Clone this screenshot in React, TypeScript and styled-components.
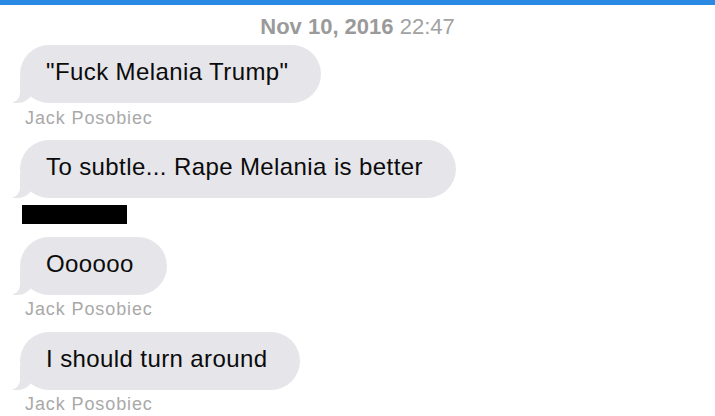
import React from "react";
import styled, { createGlobalStyle } from "styled-components";

const Global = createGlobalStyle`
  html, body { margin: 0; padding: 0; background: #ffffff; }
  body { font-family: "Liberation Sans", Arial, sans-serif; }
`;

const Page = styled.div`
  width: 715px;
  height: 416px;
  overflow: hidden;
  background: #ffffff;
  display: flex;
  flex-direction: column;
`;

const TopBar = styled.div`
  height: 5px;
  flex: none;
  background: #2a8ae3;
`;

const Thread = styled.div`
  display: flex;
  flex-direction: column;
  align-items: flex-start;
  padding: 0 20px;
`;

const DateLine = styled.div`
  align-self: stretch;
  margin-top: 9px;
  text-align: center;
  font-size: 22px;
  line-height: 26px;
  color: #a2a2a2;
`;

const DateStrong = styled.span`
  font-weight: 700;
  color: #9a9a9a;
`;

const Bubble = styled.div<{ $gap: number }>`
  position: relative;
  margin-top: ${(p) => p.$gap}px;
  height: 58px;
  box-sizing: border-box;
  padding: 12px 33px 17px 26px;
  background: #e5e5ea;
  border-radius: 29px;
  font-size: 24px;
  line-height: 29px;
  letter-spacing: 0.4px;
  color: #0b0b0b;
  white-space: nowrap;

  &::before,
  &::after {
    content: "";
    position: absolute;
    bottom: 0;
    height: 24px;
  }
  &::before {
    left: -7px;
    width: 20px;
    background: #e5e5ea;
    border-bottom-right-radius: 16px 14px;
  }
  &::after {
    left: -26px;
    width: 26px;
    background: #ffffff;
    border-bottom-right-radius: 10px;
  }
`;

const Sender = styled.div<{ $gap: number }>`
  margin-top: ${(p) => p.$gap}px;
  margin-left: 5px;
  font-size: 18px;
  line-height: 21px;
  letter-spacing: 0.9px;
  color: #a9a9a9;
`;

const Redaction = styled.div`
  margin-top: 7px;
  margin-left: 2px;
  width: 105px;
  height: 19px;
  background: #000000;
`;

export default function App() {
  return (
    <>
      <Global />
      <Page>
        <TopBar />
        <Thread>
          <DateLine>
            <DateStrong>Nov 10, 2016</DateStrong> 22:47
          </DateLine>
          <Bubble $gap={5}>"Fuck Melania Trump"</Bubble>
          <Sender $gap={5}>Jack Posobiec</Sender>
          <Bubble $gap={11}>To subtle... Rape Melania is better</Bubble>
          <Redaction />
          <Bubble $gap={13}>Oooooo</Bubble>
          <Sender $gap={4}>Jack Posobiec</Sender>
          <Bubble $gap={12}>I should turn around</Bubble>
          <Sender $gap={4}>Jack Posobiec</Sender>
        </Thread>
      </Page>
    </>
  );
}
